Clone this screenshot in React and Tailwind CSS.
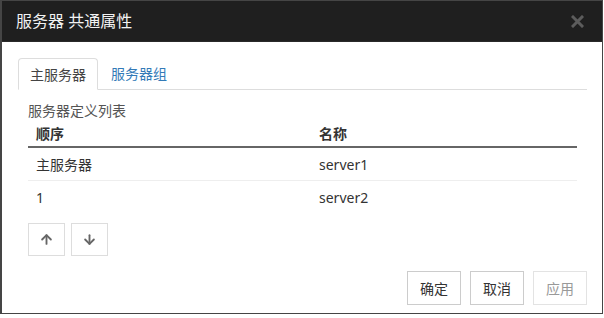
import { ArrowUp, ArrowDown } from "lucide-react";

const font = { fontFamily: '"Noto Sans", "Noto Sans CJK SC", sans-serif' };

export default function App() {
  return (
    <div className="w-[604px] h-[318px] bg-white" style={font}>
      <div className="w-[603px] h-[314px] border border-[#454545] border-l-2 flex flex-col">
        {/* title bar */}
        <div className="h-[41px] shrink-0 bg-[#1f1f1f] border-b border-[#2a2a2a] flex items-center justify-between pl-[14px] pr-[18px]">
          <span className="text-[16px] text-[#f2f2f2] leading-none">服务器 共通属性</span>
          <svg width="13" height="13" viewBox="0 0 13 13" className="mt-px">
            <path d="M2 2 L11 11 M11 2 L2 11" stroke="#5c5c5c" strokeWidth="3" strokeLinecap="square" />
          </svg>
        </div>

        <div className="flex-1 flex flex-col pl-[16px] pr-[15px] pt-[16px] pb-[8px]">
          {/* tabs */}
          <div className="flex border-b border-[#dddddd] h-[32px]">
            <div className="h-[32px] px-[11px] border border-[#dddddd] border-b-white rounded-t-[4px] bg-white flex items-center text-[14px] text-[#444] -mb-px">
              主服务器
            </div>
            <div className="h-[31px] ml-[2px] px-[11px] flex items-center text-[14px] text-[#337ab7]">服务器组</div>
          </div>

          <div className="px-[10px]">
            <div className="h-[20px] mt-[10px] flex items-center text-[14px] text-[#555]">服务器定义列表</div>

            <div className="text-[14px] text-[#333]">
              <div className="flex h-[26px] items-center border-b-2 border-[#666] font-bold box-content">
                <div className="w-[283px] pl-[8px]">顺序</div>
                <div className="pl-[8px]">名称</div>
              </div>
              <div className="flex h-[32px] items-center border-b border-[#eeeeee] box-content">
                <div className="w-[283px] pl-[8px]">主服务器</div>
                <div className="pl-[8px]">server1</div>
              </div>
              <div className="flex h-[32px] items-center">
                <div className="w-[283px] pl-[8px]">1</div>
                <div className="pl-[8px]">server2</div>
              </div>
            </div>

            <div className="flex gap-[6px] mt-[10px]">
              <button className="w-[37px] h-[33px] border border-[#dddddd] bg-white flex items-center justify-center">
                <ArrowUp size={15} strokeWidth={3} color="#666" />
              </button>
              <button className="w-[37px] h-[33px] border border-[#dddddd] bg-white flex items-center justify-center">
                <ArrowDown size={15} strokeWidth={3} color="#666" />
              </button>
            </div>
          </div>

          <div className="mt-auto flex justify-end gap-[9px]">
            <button className="w-[54px] h-[34px] border border-[#cccccc] bg-white text-[14px] text-[#333]">确定</button>
            <button className="w-[54px] h-[34px] border border-[#cccccc] bg-white text-[14px] text-[#333]">取消</button>
            <button className="w-[54px] h-[34px] border border-[#e3e3e3] bg-white text-[14px] text-[#999]">应用</button>
          </div>
        </div>
      </div>
    </div>
  );
}
